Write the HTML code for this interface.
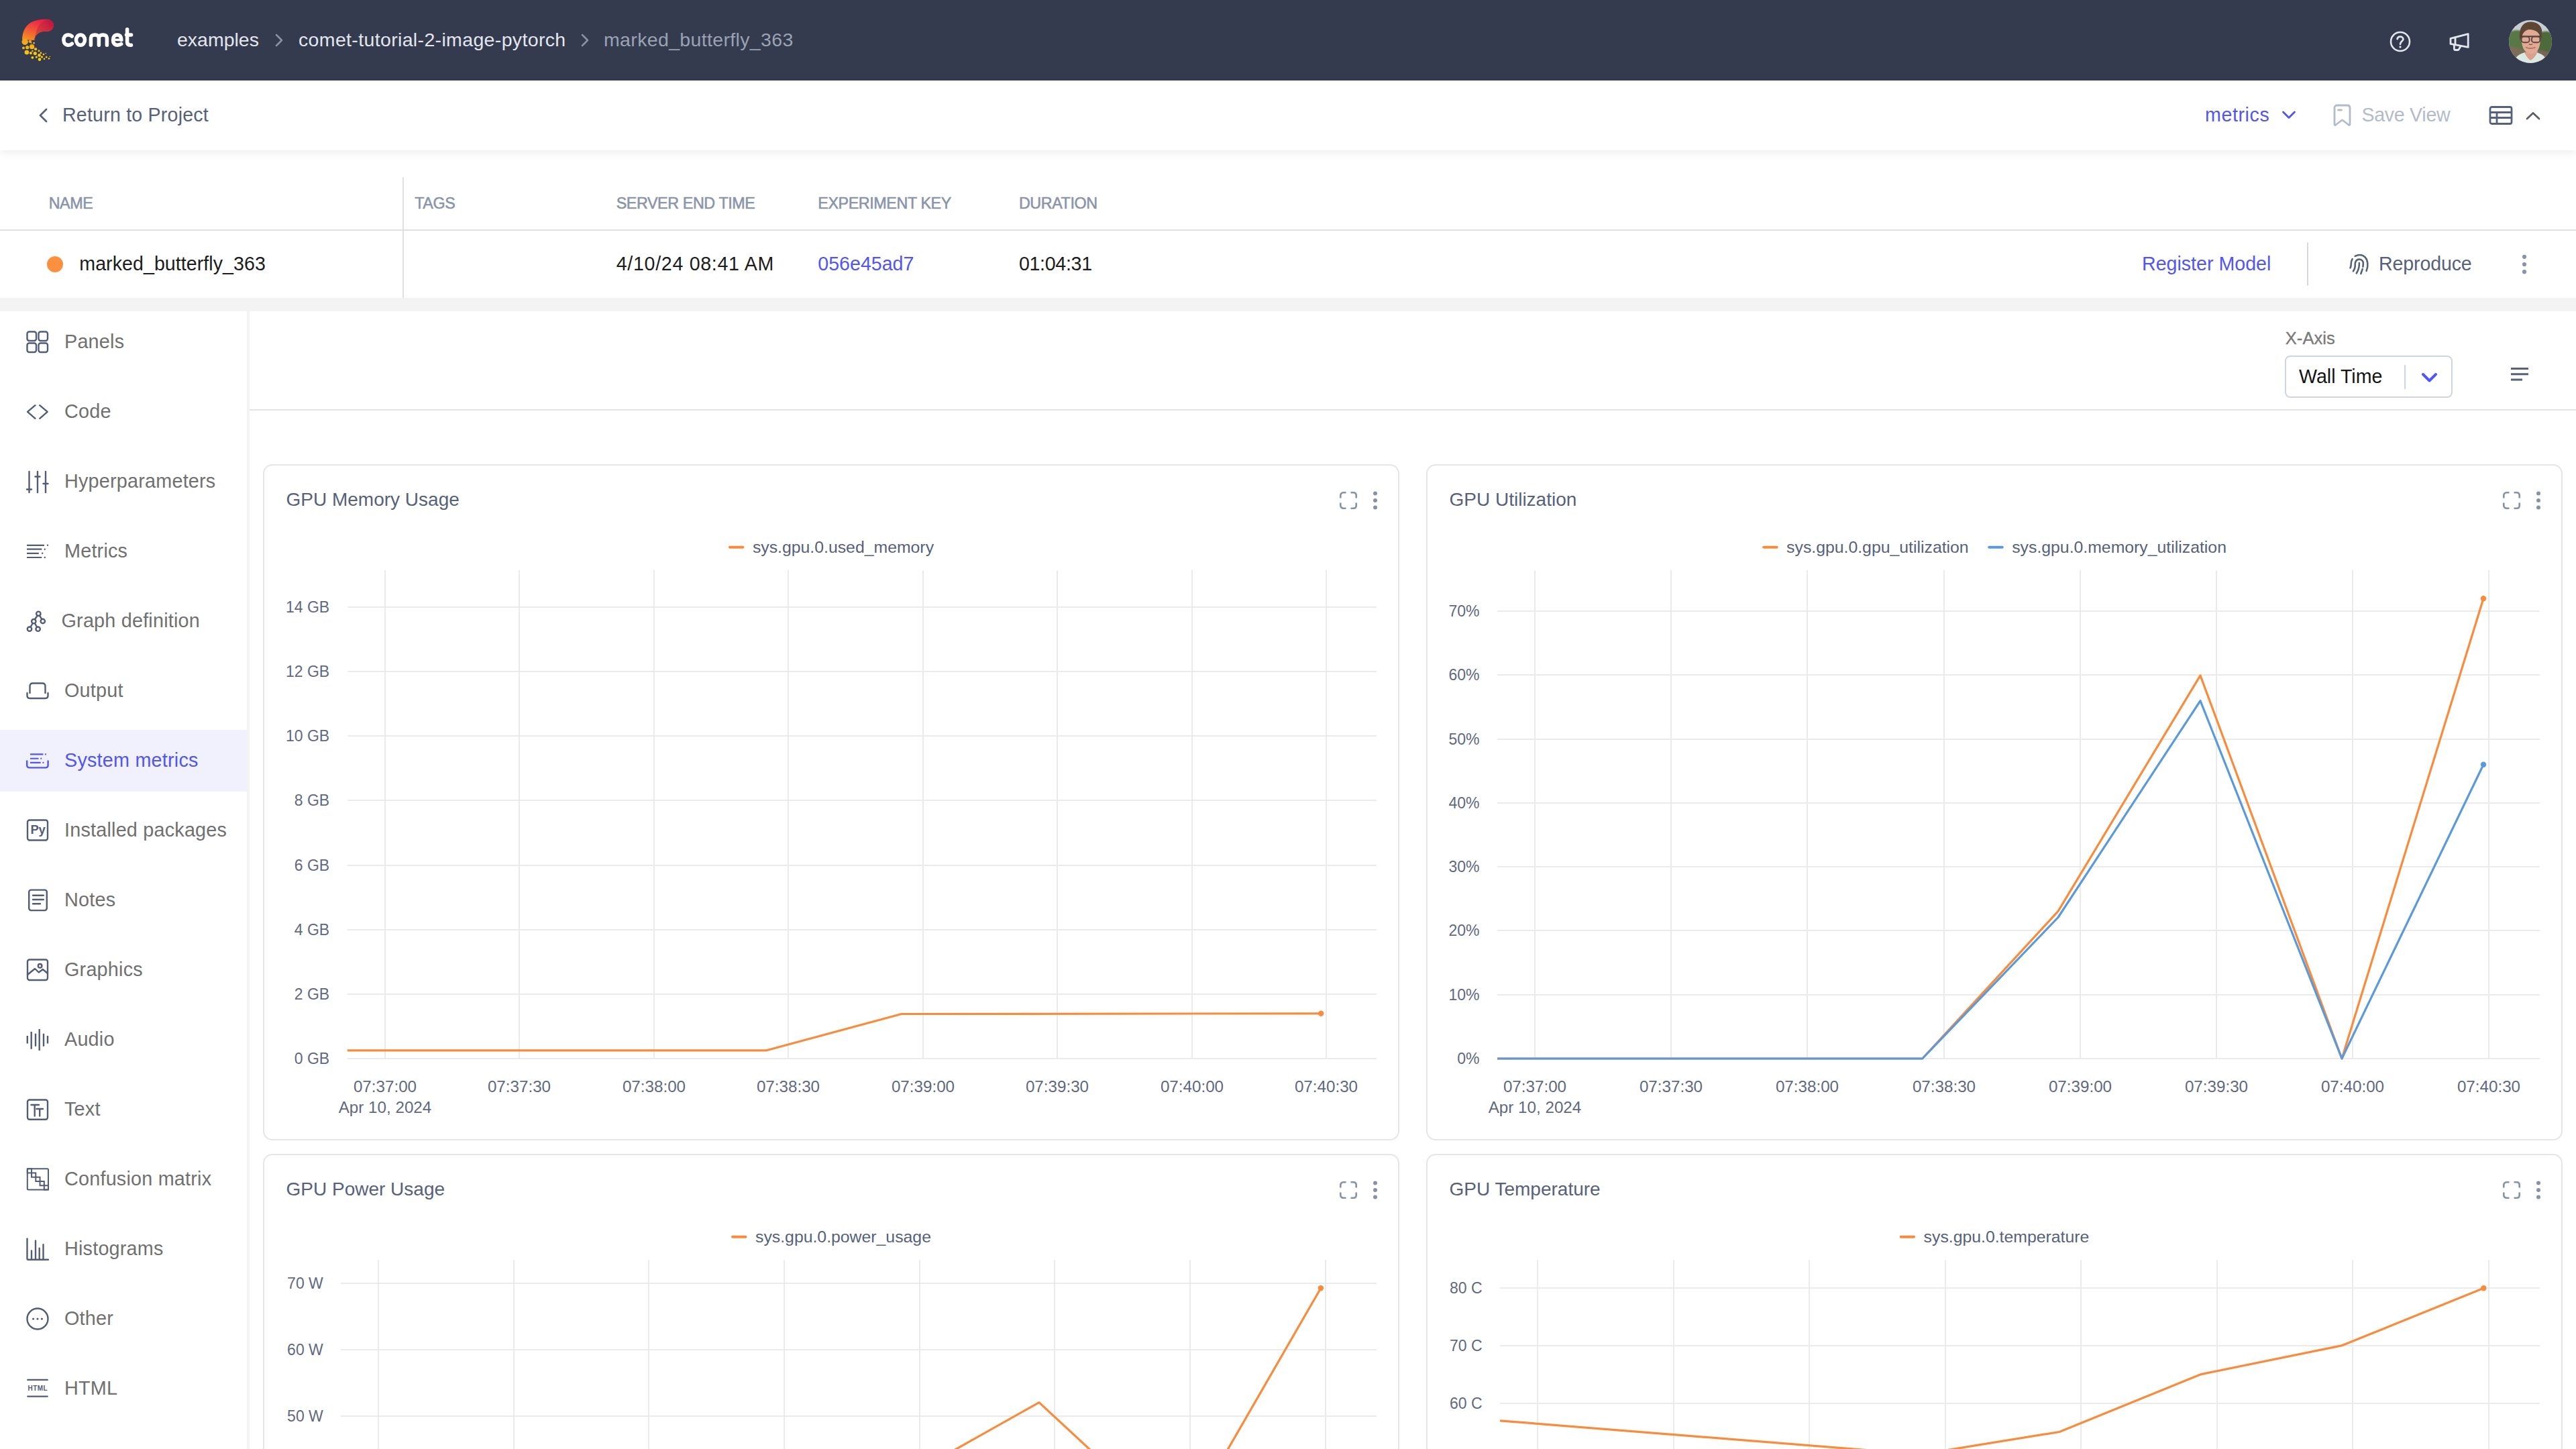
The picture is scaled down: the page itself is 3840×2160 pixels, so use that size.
<!DOCTYPE html>
<html><head><meta charset="utf-8"><title>Comet - System metrics</title>
<style>
html,body{margin:0;padding:0;width:3840px;height:2160px;overflow:hidden;background:#fff;font-family:"Liberation Sans", sans-serif;}
.t{position:absolute;line-height:1;white-space:nowrap;}
</style></head><body>
<div style="position:relative;width:3840px;height:2160px;overflow:hidden">
<div style="position:absolute;left:0px;top:0px;width:3840px;height:120px;background:#343b4e"></div>
<svg style="position:absolute;left:32px;top:28px" width="50" height="65" viewBox="0 0 50 65" fill="none">
<defs><linearGradient id="lg" x1="0.1" y1="1" x2="0.6" y2="0">
<stop offset="0" stop-color="#f5951f"/><stop offset="0.5" stop-color="#f0543a"/><stop offset="1" stop-color="#f01b48"/></linearGradient>
<linearGradient id="lg2" x1="0" y1="1" x2="1" y2="0"><stop offset="0" stop-color="#e0503a"/><stop offset="1" stop-color="#c00f42"/></linearGradient>
<linearGradient id="dg" gradientUnits="userSpaceOnUse" x1="0" y1="32" x2="0" y2="62"><stop offset="0" stop-color="#f0a41e"/><stop offset="1" stop-color="#ffd400"/></linearGradient></defs>
<path d="M1 31 C1 20 6 9 16 4.5 C22 1.5 30 0.3 38 0.8 C44 1.3 48 4.5 48 9.5 C48 14.5 44.5 18.5 38.5 18.8 C34 19 30 18.8 27 20.5 C22 23 19.5 27 19.3 32 Z" fill="url(#lg)"/>
<path d="M19.3 32 C19.5 27 22 23 27 20.5 C30 18.8 34 19 38.5 18.8 C44.5 18.5 48 14.5 48 9.5 C48 4.5 44 1.3 38 1.5 C30 4 25 9 23 16 C21.5 21 20 26 19.3 32 Z" fill="url(#lg2)"/>
<g fill="url(#dg)"><circle cx="5.2" cy="34.3" r="4.7"/><circle cx="12.9" cy="33.8" r="2.2"/><circle cx="18.6" cy="36.2" r="1.4"/><circle cx="14.6" cy="36" r="0.9"/><circle cx="3" cy="43.4" r="1.9"/><circle cx="8.7" cy="42.7" r="2.6"/><circle cx="15.6" cy="41.7" r="3.6"/><circle cx="21.1" cy="45.2" r="2.1"/><circle cx="16.4" cy="48" r="1.2"/><circle cx="26" cy="47.7" r="1.5"/><circle cx="7.9" cy="50.1" r="3.3"/><circle cx="13.9" cy="51.1" r="2.1"/><circle cx="20.3" cy="51.6" r="2.6"/><circle cx="29" cy="50.9" r="1.4"/><circle cx="26.6" cy="54.4" r="2.3"/><circle cx="33" cy="53.1" r="1.4"/><circle cx="36.2" cy="51.6" r="0.8"/><circle cx="16.4" cy="57.8" r="1.9"/><circle cx="22.3" cy="57.1" r="1.6"/><circle cx="30.5" cy="56.9" r="1.6"/><circle cx="27" cy="60.6" r="2.3"/><circle cx="34" cy="59.8" r="1.2"/><circle cx="37.2" cy="57.1" r="1.4"/><circle cx="41" cy="59.3" r="1.2"/><circle cx="42.4" cy="56.4" r="0.7"/></g></svg>
<svg style="position:absolute;left:85px;top:35px" width="120" height="45" viewBox="85 35 120 45" fill="none"><g stroke="#fff" stroke-width="5.5" stroke-linecap="round" stroke-linejoin="round"><path d="M107.2 54 C105.8 52.6 103.9 51.9 101.5 51.9 C97.4 51.9 94.9 55 94.9 59.55 C94.9 64.1 97.4 67.2 101.5 67.2 C103.9 67.2 105.9 66.5 107.3 65.1"/><ellipse cx="120" cy="59.55" rx="6.5" ry="7.65"/><path d="M135.4 67.2 V56.8 C135.4 53.7 137.6 51.9 141.4 51.9 C145.2 51.9 147.4 53.7 147.4 56.8 V67.2 M147.4 56.8 C147.4 53.7 149.6 51.9 153.4 51.9 C157.2 51.9 159.4 53.7 159.4 56.8 V67.2"/><path d="M180.9 59.4 C180.9 54.6 178.6 51.9 174.8 51.9 C170.9 51.9 168.5 55 168.5 59.55 C168.5 64.2 171 67.2 175.1 67.2 C177.5 67.2 179.3 66.6 180.7 65.6"/><path d="M169 59.4 H181.5" stroke-width="3.6" stroke-linecap="butt"/><path d="M189.6 43.8 V62.6 C189.6 65.7 191.1 67.2 194.1 67.2 H195.5 M188.5 51.9 H195.6"/></g></svg>
<div class="t" style="left:264px;top:44.67px;font-size:28.5px;color:#e3e6ee;">examples</div>
<svg style="position:absolute;left:410px;top:50px" width="12" height="20" viewBox="0 0 12 20" fill="none"><path d="M2 2 L10 10 L2 18" stroke="#8891a6" stroke-width="2.6" stroke-linecap="round" stroke-linejoin="round"/></svg>
<div class="t" style="left:445px;top:44.67px;font-size:28.5px;color:#e3e6ee;letter-spacing:0.35px;">comet-tutorial-2-image-pytorch</div>
<svg style="position:absolute;left:866px;top:50px" width="12" height="20" viewBox="0 0 12 20" fill="none"><path d="M2 2 L10 10 L2 18" stroke="#8891a6" stroke-width="2.6" stroke-linecap="round" stroke-linejoin="round"/></svg>
<div class="t" style="left:900px;top:44.67px;font-size:28.5px;color:#9aa2b4;letter-spacing:0.35px;">marked_butterfly_363</div>
<svg style="position:absolute;left:3561px;top:45px" width="34" height="34" viewBox="0 0 34 34" fill="none"><circle cx="17" cy="17" r="14" stroke="#e3e6ee" stroke-width="2.6"/><path d="M12.6 13.2 C12.9 10.9 14.8 9.6 17 9.6 C19.5 9.6 21.4 11.2 21.4 13.4 C21.4 16 17.2 16.8 17 20.8" stroke="#e3e6ee" stroke-width="2.7" stroke-linecap="round"/><rect x="15.6" y="23.6" width="2.8" height="2.8" rx="0.6" fill="#e3e6ee"/></svg>
<svg style="position:absolute;left:3649px;top:47px" width="36" height="32" viewBox="0 0 36 32" fill="none"><g stroke="#e3e6ee" stroke-width="2.8" stroke-linejoin="round" stroke-linecap="round" fill="none"><path d="M4 10.3 L30.2 3.6 V23.4 L4 18.4 Z"/><path d="M11 8.6 V19.7"/><path d="M9.4 20.4 V25.8 C9.4 26.9 10 27.5 11.1 27.5 H14.6 C15.4 27.5 15.9 27.2 16.3 26.6 L19 22"/></g></svg>
<svg style="position:absolute;left:3740px;top:30px" width="64" height="64" viewBox="0 0 64 64" fill="none"><defs><clipPath id="av"><circle cx="32" cy="32" r="32"/></clipPath>
<filter id="bl" x="-10%" y="-10%" width="120%" height="120%"><feGaussianBlur stdDeviation="1.3"/></filter>
<filter id="bl2" x="-10%" y="-10%" width="120%" height="120%"><feGaussianBlur stdDeviation="0.7"/></filter></defs>
<g clip-path="url(#av)">
<rect width="64" height="64" fill="#c6cdd3"/>
<g filter="url(#bl)">
<path d="M-2 20 C4 15 12 14 18 16 L26 20 L26 64 H-2 Z" fill="#587844"/>
<path d="M-2 40 C6 38 14 42 24 46 L24 64 H-2 Z" fill="#7b6c58"/>
<path d="M42 22 C50 15 60 16 66 20 V52 C60 50 52 52 42 50 Z" fill="#4d6b3a"/>
<path d="M42 44 C54 46 60 48 66 52 V64 H42 Z" fill="#7a6656"/>
</g>
<g filter="url(#bl2)">
<path d="M22 48 C22 56 26 62 32 64 C38 62 43 56 43 48 Z" fill="#d9a08c"/>
<path d="M6 64 C10 54 16 50 23 48.5 C26 54 29 58 32 60 C36 58 40 54 42 48.5 C49 50 55 54 58 64 Z" fill="#dde8e2"/>
<path d="M18.5 22 C18.5 14 24 10 33 10 C42 10 47 15 47 24 C47 36 46 48 33 51 C20 48 18.5 36 18.5 22 Z" fill="#e2a995"/>
<path d="M16.5 30 C14.5 18 17 6 28 3 C36 1 46 4 49 14 C50 19 49 25 47.5 30 C46.5 22 44 17 37 15 C30 13 23 13.5 19.5 24 Z" fill="#5c4636"/>
<path d="M17.5 24.3 H48" stroke="#4a3a34" stroke-width="2"/>
<rect x="18.6" y="24.6" width="12" height="8.6" rx="3.5" stroke="#5a4840" stroke-width="1.9"/>
<rect x="34" y="24.6" width="12.4" height="8.6" rx="3.5" stroke="#5a4840" stroke-width="1.9"/>
<path d="M30 35.5 C31 37 34 37 35 35.5" stroke="#8a5a4a" stroke-width="1.4"/>
<path d="M25.5 40.8 C29 42.3 35 42.3 39 40.8" stroke="#b0705e" stroke-width="1.6" stroke-linecap="round"/>
</g>
</g></svg>
<div style="position:absolute;left:0px;top:120px;width:3840px;height:104px;background:#fff;box-shadow:0 4px 12px rgba(0,0,0,0.075);z-index:2"></div>
<svg style="position:absolute;z-index:3;left:55px;top:160px" width="18" height="24" viewBox="0 0 18 24" fill="none"><path d="M14 3 L5 12 L14 21" stroke="#56617a" stroke-width="2.8" stroke-linecap="round" stroke-linejoin="round"/></svg>
<div class="t" style="left:93px;top:157.04px;font-size:28.6px;color:#56617a;letter-spacing:0.2px;z-index:3">Return to Project</div>
<div class="t" style="left:3287px;top:156.79px;font-size:28.6px;color:#5155f5;letter-spacing:0.6px;z-index:3">metrics</div>
<svg style="position:absolute;z-index:3;left:3400px;top:163px" width="24" height="18" viewBox="0 0 24 18" fill="none"><path d="M3.5 4 L12 12.5 L20.5 4" stroke="#5155f5" stroke-width="2.8" stroke-linecap="round" stroke-linejoin="round"/></svg>
<svg style="position:absolute;z-index:3;left:3476px;top:155px" width="32" height="34" viewBox="0 0 32 34" fill="none"><path d="M4 6 C4 3.5 5.5 2 8 2 H23 C25.5 2 27 3.5 27 6 V30 C27 31.5 26 32 25 31 L16.5 24.5 C15.8 24 15.2 24 14.5 24.5 L6 31 C5 32 4 31.5 4 30 Z" stroke="#b3bbcb" stroke-width="2.8" stroke-linejoin="round"/><path d="M9.5 9 H14.5" stroke="#b3bbcb" stroke-width="2.8" stroke-linecap="round"/></svg>
<div class="t" style="left:3520.5px;top:156.79px;font-size:28.6px;color:#b3bbcb;letter-spacing:-0.3px;z-index:3">Save View</div>
<svg style="position:absolute;z-index:3;left:3709px;top:157px" width="38" height="30" viewBox="0 0 38 30" fill="none"><rect x="3" y="2.5" width="32" height="25" rx="2.5" stroke="#56617a" stroke-width="2.8"/><path d="M3 10.5 H35 M3 18.5 H35 M13 10.5 V27.5" stroke="#56617a" stroke-width="2.8"/></svg>
<svg style="position:absolute;z-index:3;left:3763px;top:163px" width="26" height="18" viewBox="0 0 26 18" fill="none"><path d="M4 14 L13 5.5 L22 14" stroke="#5a5f6a" stroke-width="2.8" stroke-linecap="round" stroke-linejoin="round"/></svg>
<div style="position:absolute;left:0px;top:224px;width:3840px;height:220px;background:#fff"></div>
<div class="t" style="left:72.7px;top:291.78px;font-size:23.3px;color:#8994aa;letter-spacing:-0.4px;-webkit-text-stroke:0.55px #8994aa">NAME</div>
<div class="t" style="left:618.2px;top:291.78px;font-size:23.3px;color:#8994aa;letter-spacing:-0.4px;-webkit-text-stroke:0.55px #8994aa">TAGS</div>
<div class="t" style="left:918.7px;top:291.78px;font-size:23.3px;color:#8994aa;letter-spacing:-0.4px;-webkit-text-stroke:0.55px #8994aa">SERVER END TIME</div>
<div class="t" style="left:1219.3px;top:291.78px;font-size:23.3px;color:#8994aa;letter-spacing:-0.4px;-webkit-text-stroke:0.55px #8994aa">EXPERIMENT KEY</div>
<div class="t" style="left:1518.9px;top:291.78px;font-size:23.3px;color:#8994aa;letter-spacing:-0.4px;-webkit-text-stroke:0.55px #8994aa">DURATION</div>
<div style="position:absolute;left:600px;top:264px;width:2px;height:180px;background:#e0e0e0"></div>
<div style="position:absolute;left:0px;top:342px;width:3840px;height:2px;background:#e0e0e0"></div>
<div style="position:absolute;left:70px;top:382px;width:24px;height:24px;background:#fb913f;border-radius:50%"></div>
<div class="t" style="left:118.3px;top:379.39px;font-size:28.6px;color:#1c1c1c;letter-spacing:0.05px;">marked_butterfly_363</div>
<div class="t" style="left:918.7px;top:379.49px;font-size:28.6px;color:#1c1c1c;letter-spacing:0.7px;">4/10/24 08:41 AM</div>
<div class="t" style="left:1219.3px;top:379.49px;font-size:28.6px;color:#5155f5;">056e45ad7</div>
<div class="t" style="left:1518.9px;top:379.49px;font-size:28.6px;color:#1c1c1c;letter-spacing:-0.3px;">01:04:31</div>
<div class="t" style="left:3193px;top:379.09px;font-size:28.6px;color:#5155f5;">Register Model</div>
<div style="position:absolute;left:3439px;top:362px;width:2px;height:64px;background:#d3d8e2"></div>
<svg style="position:absolute;left:3500px;top:377px" width="32" height="34" viewBox="0 0 32 34" fill="none"><g stroke="#56617a" stroke-width="2.6" stroke-linecap="round" fill="none">
<path d="M10.7 4.9 C13 3.7 15.5 3 17.6 3 C24 3 28.6 8 29.3 15.4 C29.8 20 29 23.5 27.6 26.8"/>
<path d="M6.6 9.2 C5.3 11.5 4.8 13.5 4.8 15.4 C4.8 18.5 4.4 20.5 3.5 22.3"/>
<path d="M7.9 27.2 C9.7 24.5 10.7 22.5 10.7 20 C10.7 17.5 10.6 16 11 14.4 C11.8 11.4 14 9.6 16.9 9.6 C20.2 9.6 22.8 12 22.8 15.5 C22.8 17.5 22.6 19 22.4 20.6"/>
<path d="M16.9 15.1 C16.9 17.5 16.8 20 16.2 22.3 C15.5 25.3 14.3 28 12.8 30.3"/>
<path d="M21.7 24.1 L19.3 31"/>
</g></svg>
<div class="t" style="left:3546px;top:379.09px;font-size:28.6px;color:#56617a;letter-spacing:-0.15px;">Reproduce</div>
<svg style="position:absolute;left:3758px;top:376px" width="10" height="36" viewBox="0 0 10 36" fill="none"><circle cx="5" cy="6.8" r="3.1" fill="#8a94a8"/><circle cx="5" cy="18" r="3.1" fill="#8a94a8"/><circle cx="5" cy="29.2" r="3.1" fill="#8a94a8"/></svg>
<div style="position:absolute;left:0px;top:444px;width:3840px;height:20px;background:#f3f3f3"></div>
<div style="position:absolute;left:0px;top:464px;width:368px;height:1696px;background:#fff"></div>
<div style="position:absolute;left:368px;top:464px;width:4px;height:1696px;background:#f3f3f3"></div>
<div style="position:absolute;left:0px;top:1088px;width:368px;height:92px;background:#f0f1fd"></div>
<svg style="position:absolute;left:36px;top:490px" width="40" height="48" viewBox="0 0 40 48" fill="none"><g stroke="#525c77" stroke-width="2.4" stroke-linecap="round" stroke-linejoin="round" fill="none"><rect x="4.5" y="4.5" width="13.5" height="13.5" rx="3"/><rect x="21.5" y="4.5" width="13.5" height="13.5" rx="3"/><rect x="4.5" y="21.5" width="13.5" height="13.5" rx="3"/><rect x="21.5" y="21.5" width="13.5" height="13.5" rx="3"/></g></svg>
<div class="t" style="left:96px;top:494.92px;font-size:28.8px;color:#707070;letter-spacing:0.2px;">Panels</div>
<svg style="position:absolute;left:36px;top:594px" width="40" height="48" viewBox="0 0 40 48" fill="none"><g stroke="#525c77" stroke-width="2.4" stroke-linecap="round" stroke-linejoin="round" fill="none"><path d="M16.5 10.2 L5 19.8 L16.5 29.8"/><path d="M23.2 10.2 L34.7 19.8 L23.2 29.8"/></g></svg>
<div class="t" style="left:96px;top:598.92px;font-size:28.8px;color:#707070;letter-spacing:0.2px;">Code</div>
<svg style="position:absolute;left:36px;top:698px" width="40" height="48" viewBox="0 0 40 48" fill="none"><g stroke="#525c77" stroke-width="2.4" stroke-linecap="round" stroke-linejoin="round" fill="none"><path d="M7.5 5 V36 M20 5 V36 M32 5 V36"/><path d="M4 31.5 H11 M16.5 12.5 H23.5 M28.5 23 H35.5"/></g></svg>
<div class="t" style="left:96px;top:702.92px;font-size:28.8px;color:#707070;letter-spacing:0.2px;">Hyperparameters</div>
<svg style="position:absolute;left:36px;top:800px" width="40" height="48" viewBox="0 0 40 48" fill="none"><g stroke="#525c77" stroke-width="2.2" fill="none"><path d="M4 12.8 H30 M4 18.7 H26.3 M4 24.8 H21.8 M4 31 H26.3"/></g><g fill="#525c77"><circle cx="35" cy="12.8" r="1.2"/><circle cx="30.8" cy="18.7" r="1.2"/><circle cx="27.2" cy="24.8" r="1.2"/><circle cx="30.8" cy="31" r="1.2"/></g></svg>
<div class="t" style="left:96px;top:806.92px;font-size:28.8px;color:#707070;letter-spacing:0.2px;">Metrics</div>
<svg style="position:absolute;left:36px;top:900px" width="40" height="48" viewBox="0 0 40 48" fill="none"><g stroke="#525c77" stroke-width="2.4" stroke-linecap="round" stroke-linejoin="round" fill="none"><circle cx="21.3" cy="14.8" r="3.2"/><circle cx="14.3" cy="26.2" r="3.2"/><circle cx="27.8" cy="26" r="3.2"/><circle cx="8" cy="37.7" r="3.2"/><circle cx="20.6" cy="37.7" r="3.2"/><path d="M19.8 17.7 L15.8 23.3 M23 17.7 L26.3 23 M12.7 29 L9.6 34.8 M15.9 29 L19 34.8"/></g></svg>
<div class="t" style="left:91.5px;top:910.92px;font-size:28.8px;color:#707070;letter-spacing:0.2px;">Graph definition</div>
<svg style="position:absolute;left:36px;top:1000px" width="40" height="48" viewBox="0 0 40 48" fill="none"><g stroke="#525c77" stroke-width="2.4" stroke-linecap="round" stroke-linejoin="round" fill="none"><path d="M8.5 33 V23 C8.5 20 10 18.5 13 18.5 H27 C30 18.5 31.5 20 31.5 23 V33"/><path d="M4.5 33 V37 C4.5 39.5 6 41 8.5 41 H31.5 C34 41 35.5 39.5 35.5 37 V33"/></g></svg>
<div class="t" style="left:96px;top:1014.92px;font-size:28.8px;color:#707070;letter-spacing:0.2px;">Output</div>
<svg style="position:absolute;left:36px;top:1110px" width="40" height="48" viewBox="0 0 40 48" fill="none"><g stroke="#5155f5" stroke-width="2.1" fill="none"><path d="M9 14.4 H28.4 M9 20.7 H21.5 M9 26.9 H24.6"/></g><path d="M4.2 24.5 V30.6 C4.2 33 5.6 34.4 8 34.4 H31.8 C34.2 34.4 35.6 33 35.6 30.6 V24.5" stroke="#5155f5" stroke-width="2.4" fill="none" stroke-linecap="round"/><g fill="#5155f5"><circle cx="31.9" cy="14.4" r="1.15"/><circle cx="25.3" cy="20.7" r="1.15"/><circle cx="28.4" cy="26.9" r="1.15"/></g></svg>
<div class="t" style="left:96px;top:1118.92px;font-size:28.8px;color:#5155f5;letter-spacing:0.2px;">System metrics</div>
<svg style="position:absolute;left:36px;top:1219px" width="40" height="48" viewBox="0 0 40 48" fill="none"><rect x="5" y="3.5" width="30" height="30" rx="3" stroke="#525c77" stroke-width="2.4" fill="none"/><text x="20.4" y="24" text-anchor="middle" font-family="Liberation Sans" font-weight="700" font-size="18.5" fill="#525c77" letter-spacing="-0.5">Py</text></svg>
<div class="t" style="left:96px;top:1222.92px;font-size:28.8px;color:#707070;letter-spacing:0.2px;">Installed packages</div>
<svg style="position:absolute;left:36px;top:1321px" width="40" height="48" viewBox="0 0 40 48" fill="none"><g stroke="#525c77" stroke-width="2.4" stroke-linecap="round" stroke-linejoin="round" fill="none"><rect x="7.2" y="5.6" width="26.6" height="30.5" rx="3"/><path d="M13 13.7 H28.8 M13 20 H28.8 M13 26.3 H24"/></g></svg>
<div class="t" style="left:96px;top:1326.92px;font-size:28.8px;color:#707070;letter-spacing:0.2px;">Notes</div>
<svg style="position:absolute;left:36px;top:1421px" width="40" height="48" viewBox="0 0 40 48" fill="none"><g stroke="#525c77" stroke-width="2.4" stroke-linecap="round" stroke-linejoin="round" fill="none"><rect x="5" y="9.5" width="30" height="30.5" rx="3"/><path d="M5 32 L16 23 L21.8 28.5 L27.8 24 L35 30"/><circle cx="23.6" cy="18.8" r="2.8"/></g></svg>
<div class="t" style="left:96px;top:1430.92px;font-size:28.8px;color:#707070;letter-spacing:0.2px;">Graphics</div>
<svg style="position:absolute;left:36px;top:1520px" width="40" height="48" viewBox="0 0 40 48" fill="none"><g stroke="#525c77" stroke-width="2.4" fill="none"><path d="M4.8 24 V35.6 M10.7 18 V43.7 M17 20.7 V39.7 M22.7 14 V45.9 M29 20.7 V39.7 M35 24 V35.6"/></g></svg>
<div class="t" style="left:96px;top:1534.92px;font-size:28.8px;color:#707070;letter-spacing:0.2px;">Audio</div>
<svg style="position:absolute;left:36px;top:1636px" width="40" height="48" viewBox="0 0 40 48" fill="none"><rect x="5" y="3.5" width="30" height="29.3" rx="3" stroke="#525c77" stroke-width="2.4" fill="none"/><g stroke="#525c77" stroke-width="2.4" stroke-linecap="round" stroke-linejoin="round" fill="none"><path d="M10.5 11 H22 M15.7 11 V27.5 M18.5 17 H28 M23.2 17 V27.5"/></g></svg>
<div class="t" style="left:96px;top:1638.92px;font-size:28.8px;color:#707070;letter-spacing:0.2px;">Text</div>
<svg style="position:absolute;left:36px;top:1740px" width="40" height="48" viewBox="0 0 40 48" fill="none"><g stroke="#525c77" stroke-width="2" fill="none"><rect x="4.8" y="2.2" width="31.2" height="31.3" rx="1.5"/><rect x="4.80" y="2.20" width="6.25" height="6.27"/><rect x="11.05" y="8.47" width="6.25" height="6.27"/><rect x="17.30" y="14.74" width="6.25" height="6.27"/><rect x="23.55" y="21.01" width="6.25" height="6.27"/><rect x="29.80" y="27.28" width="6.25" height="6.27"/></g></svg>
<div class="t" style="left:96px;top:1742.92px;font-size:28.8px;color:#707070;letter-spacing:0.2px;">Confusion matrix</div>
<svg style="position:absolute;left:36px;top:1840px" width="40" height="48" viewBox="0 0 40 48" fill="none"><g stroke="#525c77" stroke-width="2.4" stroke-linecap="round" stroke-linejoin="round" fill="none"><path d="M4.5 6.4 V36.5 C4.5 37.5 5 37.7 6 37.7 H36"/><path d="M11 37.7 V24.4 M17 37.7 V9.5 M22.7 37.7 V20.8 M28.5 37.7 V15.2"/></g></svg>
<div class="t" style="left:96px;top:1846.92px;font-size:28.8px;color:#707070;letter-spacing:0.2px;">Histograms</div>
<svg style="position:absolute;left:36px;top:1940px" width="40" height="48" viewBox="0 0 40 48" fill="none"><circle cx="20" cy="26" r="15.5" stroke="#525c77" stroke-width="2.4" fill="none"/><g fill="#525c77"><circle cx="13.6" cy="26" r="1.6"/><circle cx="20" cy="26" r="1.6"/><circle cx="26.4" cy="26" r="1.6"/></g></svg>
<div class="t" style="left:96px;top:1950.92px;font-size:28.8px;color:#707070;letter-spacing:0.2px;">Other</div>
<svg style="position:absolute;left:36px;top:2040px" width="40" height="48" viewBox="0 0 40 48" fill="none"><g stroke="#525c77" stroke-width="2.2" stroke-linecap="round"><path d="M5.2 16.9 H34.8 M5.2 41.6 H34.8"/></g><text x="20.3" y="33" text-anchor="middle" font-family="Liberation Sans" font-weight="700" font-size="10" fill="#525c77" letter-spacing="0.5">HTML</text></svg>
<div class="t" style="left:96px;top:2054.92px;font-size:28.8px;color:#707070;letter-spacing:0.2px;">HTML</div>
<div style="position:absolute;left:372px;top:464px;width:3468px;height:146px;background:#fff"></div>
<div style="position:absolute;left:372px;top:610px;width:3468px;height:2px;background:#e3e3e3"></div>
<div class="t" style="left:3406.7px;top:492.41px;font-size:25.5px;color:#7a7a7a;letter-spacing:0.1px;-webkit-text-stroke:0.35px #7a7a7a">X-Axis</div>
<div style="position:absolute;left:3406px;top:530px;width:250px;height:63px;box-sizing:border-box;border:2px solid #cfd5e1;border-radius:8px;background:#fff"></div>
<div class="t" style="left:3427px;top:547.09px;font-size:28.6px;color:#141414;">Wall Time</div>
<div style="position:absolute;left:3584px;top:544px;width:2px;height:36px;background:#cfd5e1"></div>
<svg style="position:absolute;left:3606px;top:552px" width="32" height="22" viewBox="0 0 32 22" fill="none"><path d="M6 6 L15.5 15.5 L25 6" stroke="#5155f5" stroke-width="4" stroke-linecap="round" stroke-linejoin="round"/></svg>
<svg style="position:absolute;left:3740px;top:545px" width="32" height="26" viewBox="0 0 32 26" fill="none"><g stroke="#56617a" stroke-width="3" stroke-linecap="butt"><path d="M3 4.6 H29 M3 12.8 H29 M3 21 H20"/></g></svg>
<div style="position:absolute;left:372px;top:612px;width:3468px;height:1548px;background:#fff"></div>
<div style="position:absolute;left:392px;top:692px;width:1694px;height:1008px;box-sizing:border-box;border:2px solid #e6e6e6;border-radius:14px;background:#fff"></div>
<div style="position:absolute;left:2126px;top:692px;width:1694px;height:1008px;box-sizing:border-box;border:2px solid #e6e6e6;border-radius:14px;background:#fff"></div>
<div style="position:absolute;left:392px;top:1720px;width:1694px;height:1008px;box-sizing:border-box;border:2px solid #e6e6e6;border-radius:14px;background:#fff"></div>
<div style="position:absolute;left:2126px;top:1720px;width:1694px;height:1008px;box-sizing:border-box;border:2px solid #e6e6e6;border-radius:14px;background:#fff"></div>
<div class="t" style="left:426.5px;top:731.20px;font-size:28px;color:#56617a;">GPU Memory Usage</div>
<div class="t" style="left:2160.5px;top:731.20px;font-size:28px;color:#56617a;">GPU Utilization</div>
<div class="t" style="left:426.5px;top:1759.20px;font-size:28px;color:#56617a;">GPU Power Usage</div>
<div class="t" style="left:2160.5px;top:1759.20px;font-size:28px;color:#56617a;">GPU Temperature</div>
<svg style="position:absolute;left:0;top:0" width="3840" height="2160" viewBox="0 0 3840 2160" font-family="Liberation Sans, sans-serif"><g transform="translate(1997,733)" stroke="#8792a8" stroke-width="2.6" fill="none" stroke-linecap="butt"><path d="M1.3 9.5 V5.5 C1.3 3 3 1.3 5.5 1.3 H9.5"/><path d="M16.5 1.3 H20.5 C23 1.3 24.7 3 24.7 5.5 V9.5"/><path d="M24.7 16.5 V20.5 C24.7 23 23 24.7 20.5 24.7 H16.5"/><path d="M9.5 24.7 H5.5 C3 24.7 1.3 23 1.3 20.5 V16.5"/></g><circle cx="2050" cy="735.4" r="3" fill="#8792a8"/><circle cx="2050" cy="746" r="3" fill="#8792a8"/><circle cx="2050" cy="756.6" r="3" fill="#8792a8"/><path d="M1087.9 815.8 H1107.4" stroke="#f98b3d" stroke-width="4" stroke-linecap="round"/><text x="1121.9" y="824.3" font-size="24.8" fill="#56617a">sys.gpu.0.used_memory</text><g transform="translate(3731,733)" stroke="#8792a8" stroke-width="2.6" fill="none" stroke-linecap="butt"><path d="M1.3 9.5 V5.5 C1.3 3 3 1.3 5.5 1.3 H9.5"/><path d="M16.5 1.3 H20.5 C23 1.3 24.7 3 24.7 5.5 V9.5"/><path d="M24.7 16.5 V20.5 C24.7 23 23 24.7 20.5 24.7 H16.5"/><path d="M9.5 24.7 H5.5 C3 24.7 1.3 23 1.3 20.5 V16.5"/></g><circle cx="3784" cy="735.4" r="3" fill="#8792a8"/><circle cx="3784" cy="746" r="3" fill="#8792a8"/><circle cx="3784" cy="756.6" r="3" fill="#8792a8"/><path d="M2629.1 815.8 H2648.6" stroke="#f98b3d" stroke-width="4" stroke-linecap="round"/><text x="2663.1" y="824.3" font-size="24.8" fill="#56617a">sys.gpu.0.gpu_utilization</text><path d="M2965.2 815.8 H2984.7" stroke="#5b9ada" stroke-width="4" stroke-linecap="round"/><text x="2999.2" y="824.3" font-size="24.8" fill="#56617a">sys.gpu.0.memory_utilization</text><g transform="translate(1997,1761)" stroke="#8792a8" stroke-width="2.6" fill="none" stroke-linecap="butt"><path d="M1.3 9.5 V5.5 C1.3 3 3 1.3 5.5 1.3 H9.5"/><path d="M16.5 1.3 H20.5 C23 1.3 24.7 3 24.7 5.5 V9.5"/><path d="M24.7 16.5 V20.5 C24.7 23 23 24.7 20.5 24.7 H16.5"/><path d="M9.5 24.7 H5.5 C3 24.7 1.3 23 1.3 20.5 V16.5"/></g><circle cx="2050" cy="1763.4" r="3" fill="#8792a8"/><circle cx="2050" cy="1774" r="3" fill="#8792a8"/><circle cx="2050" cy="1784.6" r="3" fill="#8792a8"/><path d="M1092.0 1843.8 H1111.5" stroke="#f98b3d" stroke-width="4" stroke-linecap="round"/><text x="1126.0" y="1852.3" font-size="24.8" fill="#56617a">sys.gpu.0.power_usage</text><g transform="translate(3731,1761)" stroke="#8792a8" stroke-width="2.6" fill="none" stroke-linecap="butt"><path d="M1.3 9.5 V5.5 C1.3 3 3 1.3 5.5 1.3 H9.5"/><path d="M16.5 1.3 H20.5 C23 1.3 24.7 3 24.7 5.5 V9.5"/><path d="M24.7 16.5 V20.5 C24.7 23 23 24.7 20.5 24.7 H16.5"/><path d="M9.5 24.7 H5.5 C3 24.7 1.3 23 1.3 20.5 V16.5"/></g><circle cx="3784" cy="1763.4" r="3" fill="#8792a8"/><circle cx="3784" cy="1774" r="3" fill="#8792a8"/><circle cx="3784" cy="1784.6" r="3" fill="#8792a8"/><path d="M2833.6 1843.8 H2853.1" stroke="#f98b3d" stroke-width="4" stroke-linecap="round"/><text x="2867.6" y="1852.3" font-size="24.8" fill="#56617a">sys.gpu.0.temperature</text><path d="M574 850 V1578 M774 850 V1578 M975 850 V1578 M1175 850 V1578 M1376 850 V1578 M1576 850 V1578 M1777 850 V1578 M1977 850 V1578 M518 905 H2052 M518 1001 H2052 M518 1097 H2052 M518 1193 H2052 M518 1290 H2052 M518 1386 H2052 M518 1482 H2052 M518 1578 H2052" stroke="#ebebeb" stroke-width="2" shape-rendering="crispEdges"/><text x="491.2" y="913.2" font-size="23" fill="#5f697f" text-anchor="end">14 GB</text><text x="491.2" y="1009.2" font-size="23" fill="#5f697f" text-anchor="end">12 GB</text><text x="491.2" y="1105.2" font-size="23" fill="#5f697f" text-anchor="end">10 GB</text><text x="491.2" y="1201.2" font-size="23" fill="#5f697f" text-anchor="end">8 GB</text><text x="491.2" y="1298.2" font-size="23" fill="#5f697f" text-anchor="end">6 GB</text><text x="491.2" y="1394.2" font-size="23" fill="#5f697f" text-anchor="end">4 GB</text><text x="491.2" y="1490.2" font-size="23" fill="#5f697f" text-anchor="end">2 GB</text><text x="491.2" y="1586.2" font-size="23" fill="#5f697f" text-anchor="end">0 GB</text><text x="574" y="1628" font-size="24.2" fill="#5f697f" text-anchor="middle">07:37:00</text><text x="774" y="1628" font-size="24.2" fill="#5f697f" text-anchor="middle">07:37:30</text><text x="975" y="1628" font-size="24.2" fill="#5f697f" text-anchor="middle">07:38:00</text><text x="1175" y="1628" font-size="24.2" fill="#5f697f" text-anchor="middle">07:38:30</text><text x="1376" y="1628" font-size="24.2" fill="#5f697f" text-anchor="middle">07:39:00</text><text x="1576" y="1628" font-size="24.2" fill="#5f697f" text-anchor="middle">07:39:30</text><text x="1777" y="1628" font-size="24.2" fill="#5f697f" text-anchor="middle">07:40:00</text><text x="1977" y="1628" font-size="24.2" fill="#5f697f" text-anchor="middle">07:40:30</text><text x="574" y="1659.4" font-size="24.2" fill="#5f697f" text-anchor="middle">Apr 10, 2024</text><path d="M518.0 1565.8 L1142.7 1565.8 L1343.8 1511.5 L1969.2 1510.8" stroke="#f98b3d" stroke-width="3.2" fill="none" stroke-linejoin="round"/><circle cx="1969.2" cy="1510.8" r="4.2" fill="#f98b3d"/><path d="M2288 850 V1578 M2491 850 V1578 M2694 850 V1578 M2898 850 V1578 M3101 850 V1578 M3304 850 V1578 M3507 850 V1578 M3710 850 V1578 M2232 911 H3786 M2232 1006 H3786 M2232 1102 H3786 M2232 1197 H3786 M2232 1292 H3786 M2232 1387 H3786 M2232 1483 H3786 M2232 1578 H3786" stroke="#ebebeb" stroke-width="2" shape-rendering="crispEdges"/><text x="2205.55" y="919.2" font-size="23" fill="#5f697f" text-anchor="end">70%</text><text x="2205.55" y="1014.2" font-size="23" fill="#5f697f" text-anchor="end">60%</text><text x="2205.55" y="1110.2" font-size="23" fill="#5f697f" text-anchor="end">50%</text><text x="2205.55" y="1205.2" font-size="23" fill="#5f697f" text-anchor="end">40%</text><text x="2205.55" y="1300.2" font-size="23" fill="#5f697f" text-anchor="end">30%</text><text x="2205.55" y="1395.2" font-size="23" fill="#5f697f" text-anchor="end">20%</text><text x="2205.55" y="1491.2" font-size="23" fill="#5f697f" text-anchor="end">10%</text><text x="2205.55" y="1586.2" font-size="23" fill="#5f697f" text-anchor="end">0%</text><text x="2288" y="1628" font-size="24.2" fill="#5f697f" text-anchor="middle">07:37:00</text><text x="2491" y="1628" font-size="24.2" fill="#5f697f" text-anchor="middle">07:37:30</text><text x="2694" y="1628" font-size="24.2" fill="#5f697f" text-anchor="middle">07:38:00</text><text x="2898" y="1628" font-size="24.2" fill="#5f697f" text-anchor="middle">07:38:30</text><text x="3101" y="1628" font-size="24.2" fill="#5f697f" text-anchor="middle">07:39:00</text><text x="3304" y="1628" font-size="24.2" fill="#5f697f" text-anchor="middle">07:39:30</text><text x="3507" y="1628" font-size="24.2" fill="#5f697f" text-anchor="middle">07:40:00</text><text x="3710" y="1628" font-size="24.2" fill="#5f697f" text-anchor="middle">07:40:30</text><text x="2288" y="1659.4" font-size="24.2" fill="#5f697f" text-anchor="middle">Apr 10, 2024</text><path d="M2232.0 1578.0 L2865.7 1578.0 L3068.0 1358.4 L3280.0 1006.9 L3491.0 1578.0 L3702.0 892.2" stroke="#f98b3d" stroke-width="3.2" fill="none" stroke-linejoin="round"/><circle cx="3702" cy="892.2" r="4.2" fill="#f98b3d"/><path d="M2232.0 1578.0 L2865.7 1578.0 L3068.0 1367.5 L3280.0 1044.6 L3491.0 1578.0 L3702.0 1139.8" stroke="#5b9ada" stroke-width="3.2" fill="none" stroke-linejoin="round"/><circle cx="3702" cy="1139.8" r="4.2" fill="#5b9ada"/><path d="M564 1878 V2200 M766 1878 V2200 M967 1878 V2200 M1169 1878 V2200 M1371 1878 V2200 M1572 1878 V2200 M1774 1878 V2200 M1976 1878 V2200 M508 1913 H2052 M508 2012 H2052 M508 2111 H2052" stroke="#ebebeb" stroke-width="2" shape-rendering="crispEdges"/><text x="481.8" y="1921.2" font-size="23" fill="#5f697f" text-anchor="end">70 W</text><text x="481.8" y="2020.2" font-size="23" fill="#5f697f" text-anchor="end">60 W</text><text x="481.8" y="2119.2" font-size="23" fill="#5f697f" text-anchor="end">50 W</text><path d="M508.0 2420.0 L1137.7 2420.0 L1338.6 2208.8 L1549.0 2090.6 L1758.5 2285.0 L1968.9 1920.2" stroke="#f98b3d" stroke-width="3.2" fill="none" stroke-linejoin="round"/><circle cx="1968.9" cy="1920.2" r="4.2" fill="#f98b3d"/><path d="M2292 1878 V2200 M2495 1878 V2200 M2697 1878 V2200 M2900 1878 V2200 M3102 1878 V2200 M3305 1878 V2200 M3507 1878 V2200 M3710 1878 V2200 M2236 1920 H3786 M2236 2006 H3786 M2236 2092 H3786" stroke="#ebebeb" stroke-width="2" shape-rendering="crispEdges"/><text x="2209.5" y="1928.2" font-size="23" fill="#5f697f" text-anchor="end">80 C</text><text x="2209.5" y="2014.2" font-size="23" fill="#5f697f" text-anchor="end">70 C</text><text x="2209.5" y="2100.2" font-size="23" fill="#5f697f" text-anchor="end">60 C</text><path d="M2236.0 2117.8 L2863.0 2168.0 L3069.9 2134.5 L3281.2 2048.6 L3491.6 2005.6 L3702.3 1920.3" stroke="#f98b3d" stroke-width="3.2" fill="none" stroke-linejoin="round"/><circle cx="3702.3" cy="1920.3" r="4.2" fill="#f98b3d"/></svg>

</div>
<script>(function(){var w=window.innerWidth;if(w&&Math.abs(w-3840)>4){document.documentElement.style.zoom=(w/3840);}})();</script>
</body></html>
